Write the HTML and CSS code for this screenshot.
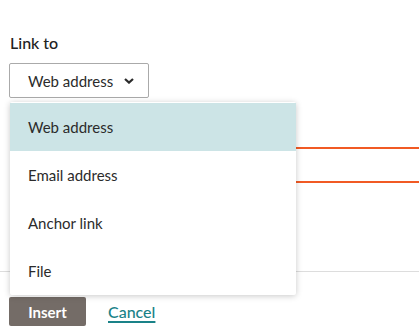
FILE: index.html
```html
<!DOCTYPE html>
<html>
<head>
<meta charset="utf-8">
<link rel="stylesheet" href="styles.css">
</head>
<body>
<div class="dialog">
  <div class="form">
    <div class="label">Link to</div>
    <div class="select-wrap">
      <button class="select">
        <span>Web address</span>
        <svg class="chev" width="10" height="6" viewBox="0 0 10 6"><path d="M1 1 L5 4.6 L9 1" fill="none" stroke="#2b2b2b" stroke-width="2.2"/></svg>
      </button>
      <ul class="menu">
        <li class="item active">Web address</li>
        <li class="item">Email address</li>
        <li class="item">Anchor link</li>
        <li class="item">File</li>
      </ul>
    </div>
    <div class="input"></div>
  </div>
  <div class="footer">
    <button class="insert">Insert</button>
    <a class="cancel" href="#">Cancel</a>
  </div>
</div>
</body>
</html>
```
FILE: styles.css
```css
html, body {
  margin: 0;
  padding: 0;
  background: #ffffff;
  overflow: hidden;
}
body {
  font-family: Lato, "Noto Sans", sans-serif;
  color: #2b2b2b;
  width: 419px;
  height: 333px;
}
.form {
  padding: 33px 0 0 9px;
  height: 272px;
  box-sizing: border-box;
  border-bottom: 1px solid #dddddd;
}
.label {
  font-size: 16px;
  line-height: 20px;
  font-weight: 500;
  color: #222;
  padding-left: 1px;
}
.select-wrap {
  position: relative;
  margin-top: 10px;
}
.select {
  display: flex;
  align-items: center;
  gap: 11px;
  width: 140px;
  height: 35px;
  box-sizing: border-box;
  padding: 0 0 0 18px;
  border: 1px solid #aaaaaa;
  border-radius: 2px;
  background: #fff;
  font-family: inherit;
  font-size: 15px;
  color: #2b2b2b;
}
.chev {
  display: block;
}
.menu {
  position: absolute;
  top: 39px;
  left: 1px;
  width: 286px;
  margin: 0;
  padding: 1px 0 0;
  list-style: none;
  background: #fff;
  box-shadow: 0 1px 6px rgba(0,0,0,0.22);
  border-radius: 2px;
  z-index: 5;
}
.item {
  height: 48px;
  line-height: 48px;
  padding-left: 18px;
  font-size: 15px;
  color: #2b2b2b;
}
.item.active {
  background: #cce4e6;
}
.input {
  margin-top: 49px;
  height: 36px;
  box-sizing: border-box;
  border-top: 2px solid #f15a24;
  border-bottom: 2px solid #f15a24;
  margin-left: 1px;
}
.footer {
  display: flex;
  align-items: center;
  gap: 22px;
  padding: 25px 0 0 9px;
}
.insert {
  width: 77px;
  height: 29px;
  border: none;
  border-radius: 2px;
  background: #746c67;
  color: #fff;
  font-family: inherit;
  font-weight: 700;
  font-size: 15px;
}
.cancel {
  color: #1a8288;
  font-size: 16px;
  font-weight: 500;
  text-decoration: underline;
  text-decoration-thickness: 1.5px;
  text-underline-offset: 3px;
}
```
